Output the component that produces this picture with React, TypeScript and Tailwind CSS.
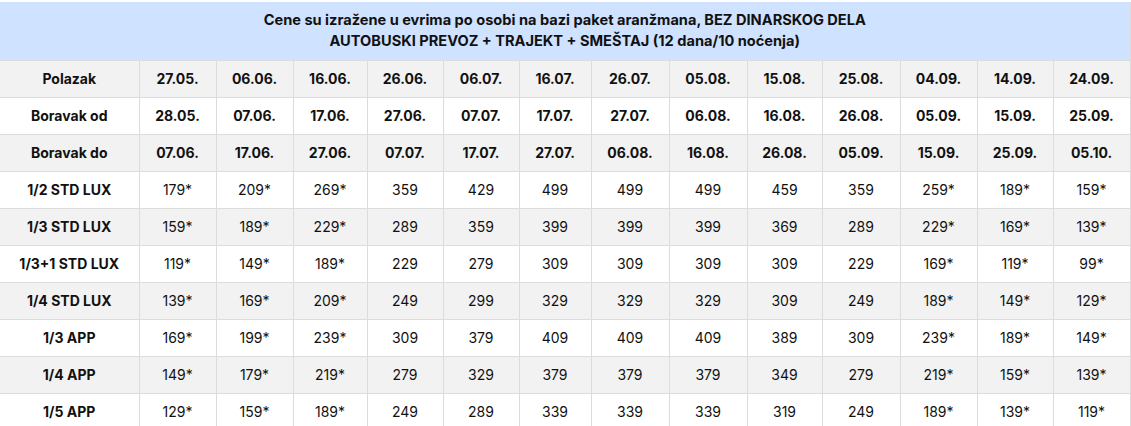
const dates = {
  polazak: ["27.05.", "06.06.", "16.06.", "26.06.", "06.07.", "16.07.", "26.07.", "05.08.", "15.08.", "25.08.", "04.09.", "14.09.", "24.09."],
  od: ["28.05.", "07.06.", "17.06.", "27.06.", "07.07.", "17.07.", "27.07.", "06.08.", "16.08.", "26.08.", "05.09.", "15.09.", "25.09."],
  do: ["07.06.", "17.06.", "27.06.", "07.07.", "17.07.", "27.07.", "06.08.", "16.08.", "26.08.", "05.09.", "15.09.", "25.09.", "05.10."],
}

const prices: [string, string[]][] = [
  ["1/2 STD LUX", ["179*", "209*", "269*", "359", "429", "499", "499", "499", "459", "359", "259*", "189*", "159*"]],
  ["1/3 STD LUX", ["159*", "189*", "229*", "289", "359", "399", "399", "399", "369", "289", "229*", "169*", "139*"]],
  ["1/3+1 STD LUX", ["119*", "149*", "189*", "229", "279", "309", "309", "309", "309", "229", "169*", "119*", "99*"]],
  ["1/4 STD LUX", ["139*", "169*", "209*", "249", "299", "329", "329", "329", "309", "249", "189*", "149*", "129*"]],
  ["1/3 APP", ["169*", "199*", "239*", "309", "379", "409", "409", "409", "389", "309", "239*", "189*", "149*"]],
  ["1/4 APP", ["149*", "179*", "219*", "279", "329", "379", "379", "379", "349", "279", "219*", "159*", "139*"]],
  ["1/5 APP", ["129*", "159*", "189*", "249", "289", "339", "339", "339", "319", "249", "189*", "139*", "119*"]],
]

const colWidths = [139, 77, 77, 74, 76, 76, 72, 78, 78, 75, 78, 77, 76, 77]

export default function App() {
  const rows: { label: string; cells: string[]; bold: boolean }[] = [
    { label: "Polazak", cells: dates.polazak, bold: true },
    { label: "Boravak od", cells: dates.od, bold: true },
    { label: "Boravak do", cells: dates.do, bold: true },
    ...prices.map(([label, cells]) => ({ label, cells, bold: false })),
  ]

  return (
    <div className="w-[1131px] bg-white pt-[2px] font-['Inter',sans-serif] text-[#111]">
      <table className="w-[1130px] table-fixed border-collapse">
        <colgroup>
          {colWidths.map((w, i) => (
            <col key={i} style={{ width: w }} />
          ))}
        </colgroup>
        <thead>
          <tr>
            <th
              colSpan={14}
              className="h-[58px] border-r border-[#dcdcdc] bg-[#cfe2ff] text-center text-[14.6px] font-bold leading-[21px]"
            >
              Cene su izražene u evrima po osobi na bazi paket aranžmana, BEZ DINARSKOG DELA
              <br />
              AUTOBUSKI PREVOZ + TRAJEKT + SMEŠTAJ (12 dana/10 noćenja)
            </th>
          </tr>
        </thead>
        <tbody>
          {rows.map((row, i) => (
            <tr key={row.label} className={i % 2 === 0 ? "bg-[#f2f2f2]" : "bg-white"}>
              <td className="h-[37px] border border-l-0 border-[#dcdcdc] p-0 text-center text-[14px] font-bold">
                {row.label}
              </td>
              {row.cells.map((c, j) => (
                <td
                  key={j}
                  className={`h-[37px] border border-[#dcdcdc] p-0 text-center text-[14px] ${
                    row.bold ? "font-bold" : "font-normal"
                  }`}
                >
                  {c}
                </td>
              ))}
            </tr>
          ))}
        </tbody>
      </table>
    </div>
  )
}
